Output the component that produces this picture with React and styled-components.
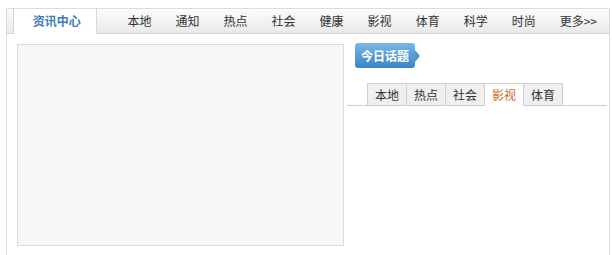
import React from 'react'
import styled, { createGlobalStyle } from 'styled-components'

const GlobalStyle = createGlobalStyle`
  body {
    margin: 0;
    background: #fff;
    font-family: "Noto Sans CJK SC", "Liberation Sans", sans-serif;
    font-size: 12px;
    color: #333;
  }
`

const Box = styled.div`
  margin: 8px 0 0 6px;
  width: 602px;
  height: 247px;
  border: 1px solid #dcdcdc;
  border-bottom: none;
`

const Nav = styled.div`
  display: flex;
  align-items: flex-start;
  height: 24px;
  border-bottom: 1px solid #d6d6d6;
  background: linear-gradient(#fcfcfc, #e9e9e9);
`

const ActiveTab = styled.div`
  margin-left: 6px;
  width: 87px;
  height: 25px;
  line-height: 24px;
  box-sizing: border-box;
  padding-left: 4px;
  background: #fff;
  border-left: 1px solid #d6d6d6;
  border-right: 1px solid #d6d6d6;
  text-align: center;
  font-weight: bold;
  color: #3d7db5;
`

const Menu = styled.div`
  display: flex;
  margin-left: 19px;
`

const MenuItem = styled.a`
  padding: 0 12px;
  line-height: 24px;
  color: #333;
  text-decoration: none;
  white-space: nowrap;
`

const Body = styled.div`
  display: flex;
  padding: 10px 0 0 10px;
`

const Panel = styled.div`
  width: 325px;
  height: 200px;
  border: 1px solid #dadada;
  background: #f7f7f7;
`

const Side = styled.div`
  margin-left: 3px;
  width: 260px;
`

const Badge = styled.div`
  position: relative;
  display: inline-block;
  margin: -1px 0 0 8px;
  height: 25px;
  line-height: 25px;
  padding: 0 6px;
  border-radius: 3px;
  background: linear-gradient(#7ab7e7, #3a84c6);
  color: #fff;
  font-weight: bold;
  font-size: 12px;

  &::after {
    content: '';
    position: absolute;
    right: -5px;
    top: 7px;
    border-top: 6px solid transparent;
    border-bottom: 6px solid transparent;
    border-left: 5px solid #4f97d3;
  }
`

const Tabs = styled.div`
  display: flex;
  margin-top: 15px;
  padding-left: 20px;
  border-bottom: 1px solid #cfcfcf;
`

const Tab = styled.div`
  width: 38px;
  height: 21px;
  line-height: 21px;
  text-align: center;
  margin-bottom: -1px;
  border: 1px solid #cfcfcf;
  border-left: ${p => (p.$first ? '1px solid #cfcfcf' : 'none')};
  border-bottom: 1px solid ${p => (p.$active ? '#fff' : '#cfcfcf')};
  background: ${p => (p.$active ? '#fff' : '#efefef')};
  color: ${p => (p.$active ? '#cc6a1c' : '#333')};
`

const menu = ['本地', '通知', '热点', '社会', '健康', '影视', '体育', '科学', '时尚', '更多>>']
const tabs = ['本地', '热点', '社会', '影视', '体育']

export default function App() {
  return (
    <>
      <GlobalStyle />
      <Box>
        <Nav>
          <ActiveTab>资讯中心</ActiveTab>
          <Menu>
            {menu.map(m => (
              <MenuItem key={m}>{m}</MenuItem>
            ))}
          </Menu>
        </Nav>
        <Body>
          <Panel />
          <Side>
            <Badge>今日话题</Badge>
            <Tabs>
              {tabs.map((t, i) => (
                <Tab key={t} $first={i === 0} $active={t === '影视'}>
                  {t}
                </Tab>
              ))}
            </Tabs>
          </Side>
        </Body>
      </Box>
    </>
  )
}
